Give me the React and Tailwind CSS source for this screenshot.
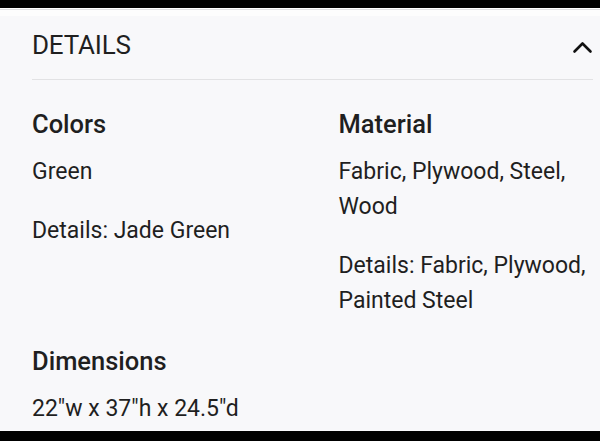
const sections = [
  { title: 'Colors', lines: ['Green', 'Details: Jade Green'] },
  { title: 'Material', lines: ['Fabric, Plywood, Steel, Wood', 'Details: Fabric, Plywood, Painted Steel'] },
  { title: 'Dimensions', lines: ['22"w x 37"h x 24.5"d'] },
];

const Section = ({ title, lines }) => (
  <div className="flex flex-col">
    <h3 className="text-[25.5px] leading-[30px] font-medium">{title}</h3>
    <div className="mt-[15px] flex flex-col gap-[24px]">
      {lines.map((line) => (
        <p key={line} className="text-[23px] leading-[35px]">
          {line}
        </p>
      ))}
    </div>
  </div>
);

const App = () => {
  return (
    <div
      className="w-[600px] h-[441px] flex flex-col bg-[#f8f8fa] text-[#1f1f1f] overflow-hidden"
      style={{ fontFamily: 'Roboto, "Noto Sans", sans-serif' }}
    >
      <div className="h-[8px] bg-black" />
      <div className="h-[1px] bg-white" />
      <div className="h-[1px] bg-[#e0e0e2]" />
      <div className="h-[6px] bg-[#fdfdfd]" />

      <div className="flex-1 pl-[32px] pr-[7px]">
        <div className="pt-[13px] pb-[18px] flex justify-between items-start border-b border-[#e2e2e4]">
          <span className="text-[26px] leading-[32px] tracking-[-0.2px]">DETAILS</span>
          <svg
            className="mt-[12px]"
            width="21"
            height="13"
            viewBox="0 0 21 13"
            fill="none"
            stroke="#111"
            strokeWidth="2.6"
            strokeLinecap="round"
            strokeLinejoin="round"
          >
            <path d="M2.5 10.5 L10.5 2.5 L18.5 10.5" />
          </svg>
        </div>

        <div className="pt-[29px] grid grid-cols-2 gap-x-[52px] gap-y-[28px]">
          {sections.map((s) => (
            <Section key={s.title} title={s.title} lines={s.lines} />
          ))}
        </div>
      </div>

      <div className="h-[10px] bg-black" />
    </div>
  );
};

export default App;
